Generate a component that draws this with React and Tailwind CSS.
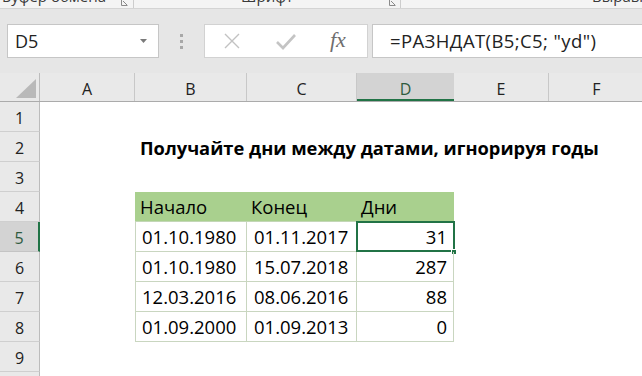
import React from "react";

const dataRows = [
  ["01.10.1980", "01.11.2017", "31"],
  ["01.10.1980", "15.07.2018", "287"],
  ["12.03.2016", "08.06.2016", "88"],
  ["01.09.2000", "01.09.2013", "0"],
];

function Launcher() {
  return (
    <svg width="7" height="6" viewBox="0 0 7 6" className="shrink-0">
      <path d="M0.5 0 V5.5 H6.5" fill="none" stroke="#8a8a8a" strokeWidth="1" />
      <path d="M2 1 L6 5" stroke="#8a8a8a" strokeWidth="1" />
    </svg>
  );
}

function RowHeader({ n, selected }) {
  return (
    <div
      className={
        selected
          ? "w-[40px] shrink-0 h-full bg-[#d3d3d3] border-b border-[#c4c4c4] border-r-2 border-r-[#217346] flex items-center justify-center pt-[3px] text-[16px] text-[#2f5b40]"
          : "w-[40px] shrink-0 h-full bg-[#e9e9e9] border-b border-[#cfcfcf] border-r border-r-[#bcbcbc] flex items-center justify-center pt-[3px] text-[16px] text-[#222]"
      }
    >
      {n}
    </div>
  );
}

function Blank({ w }) {
  return <div className={"shrink-0 h-full " + w} />;
}

export default function App() {
  return (
    <div className="w-[642px] h-[376px] overflow-hidden bg-white font-['Open_Sans',sans-serif] text-black">
      {/* ribbon bottom strip */}
      <div className="h-[9px] bg-[#f4f4f4] border-b border-[#d4d4d4] flex overflow-hidden text-[15px] leading-[15px] text-[#3a3a3a]">
        <div className="w-[134px] shrink-0 border-r border-[#cdcdcd] flex items-end relative">
          <span className="mb-[4px] ml-[2px] whitespace-nowrap">Буфер обмена</span>
          <div className="absolute left-[121px] top-0">
            <Launcher />
          </div>
        </div>
        <div className="w-[267px] shrink-0 border-r border-[#cdcdcd] flex items-end justify-center relative">
          <span className="mb-[4px] whitespace-nowrap">Шрифт</span>
          <div className="absolute left-[255px] top-0">
            <Launcher />
          </div>
        </div>
        <div className="flex-1 flex items-end pl-[191px]">
          <span className="mb-[4px] whitespace-nowrap">Выравнивание</span>
        </div>
      </div>

      {/* formula bar */}
      <div className="h-[64px] bg-[#e6e6e6] flex items-start pt-[15px] pl-[7px]">
        <div className="w-[152px] h-[34px] shrink-0 bg-white border border-[#c6c6c6] flex items-center justify-between pl-[7px] pr-[11px]">
          <span className="text-[18px] text-[#222] leading-none">D5</span>
          <svg width="7" height="4" viewBox="0 0 7 4">
            <path d="M0 0 H7 L3.5 4 Z" fill="#7a7a7a" />
          </svg>
        </div>
        <div className="w-[45px] h-[34px] shrink-0 flex flex-col items-center justify-center gap-[3px]">
          <div className="w-[3px] h-[3px] bg-[#a8a8a8]" />
          <div className="w-[3px] h-[3px] bg-[#a8a8a8]" />
          <div className="w-[3px] h-[3px] bg-[#a8a8a8]" />
        </div>
        <div className="w-[164px] h-[34px] shrink-0 bg-white border border-[#d2d2d2] flex items-center pl-[18px]">
          <svg width="18" height="16" viewBox="0 0 18 16" className="shrink-0">
            <path d="M2 1 L16 15 M16 1 L2 15" stroke="#c2c2c2" strokeWidth="1.4" fill="none" />
          </svg>
          <svg width="20" height="17" viewBox="0 0 20 17" className="shrink-0 ml-[35px]">
            <path d="M1 9 L7 15 L19 2" stroke="#c4c4c4" strokeWidth="2.6" fill="none" />
          </svg>
          <span className="ml-[34px] font-['Liberation_Serif',serif] italic text-[22px] leading-none text-[#6e6e6e] -mt-[2px]">
            fx
          </span>
        </div>
        <div className="ml-[4px] flex-1 h-[34px] bg-white border border-[#c6c6c6] border-r-0 flex items-center pl-[17px]">
          <span className="text-[18.5px] tracking-[0.4px] text-[#222] leading-none whitespace-nowrap">=РАЗНДАТ(B5;C5; "yd")</span>
        </div>
      </div>

      {/* column headers */}
      <div className="h-[29px] flex bg-[#e9e9e9] border-b border-[#ababab] text-[16px] text-[#222]">
        <div className="w-[40px] shrink-0 border-r border-[#bcbcbc] flex items-end justify-end pr-[3px] pb-[3px]">
          <svg width="20" height="19" viewBox="0 0 20 19">
            <path d="M20 0 V19 H0 Z" fill="#b9b9b9" />
          </svg>
        </div>
        <div className="w-[95px] shrink-0 border-r border-[#c8c8c8] flex items-center justify-center pt-[4px]">A</div>
        <div className="w-[112px] shrink-0 border-r border-[#c8c8c8] flex items-center justify-center pt-[4px]">B</div>
        <div className="w-[110px] shrink-0 border-r border-[#c8c8c8] flex items-center justify-center pt-[4px]">C</div>
        <div className="w-[97px] shrink-0 bg-[#d3d3d3] border-b-2 border-[#217346] flex items-center justify-center pt-[6px] text-[#2f5b40]">D</div>
        <div className="w-[95px] shrink-0 border-r border-[#c8c8c8] flex items-center justify-center pt-[4px]">E</div>
        <div className="flex-1 flex items-center pt-[4px]">
          <span className="w-[95px] text-center">F</span>
        </div>
      </div>

      {/* rows */}
      <div className="flex flex-col text-[18.5px] leading-none">
        <div className="h-[30px] flex">
          <RowHeader n="1" />
        </div>
        <div className="h-[30px] flex">
          <RowHeader n="2" />
          <Blank w="w-[95px]" />
          <div className="h-full flex items-end pb-[5px] pl-[5px] font-bold text-[18.3px] whitespace-nowrap">
            Получайте дни между датами, игнорируя годы
          </div>
        </div>
        <div className="h-[30px] flex">
          <RowHeader n="3" />
        </div>
        <div className="h-[30px] flex">
          <RowHeader n="4" />
          <Blank w="w-[95px]" />
          <div className="w-[112px] shrink-0 h-full bg-[#a9d08e] border-b border-[#c3d7b6] flex items-end pb-[5px] pl-[5px]">Начало</div>
          <div className="w-[110px] shrink-0 h-full bg-[#a9d08e] border-b border-[#c3d7b6] flex items-end pb-[5px] pl-[4px]">Конец</div>
          <div className="w-[97px] shrink-0 h-full bg-[#a9d08e] border-b border-[#c3d7b6] flex items-end pb-[5px] pl-[4px]">Дни</div>
        </div>
        {dataRows.map((r, i) => (
          <div key={i} className="h-[30px] flex">
            <RowHeader n={String(5 + i)} selected={i === 0} />
            <Blank w="w-[95px]" />
            <div className="w-[112px] shrink-0 h-full border-l border-r border-b border-[#c9d6c0] flex items-end pb-[5px] pl-[6px]">{r[0]}</div>
            <div className="w-[110px] shrink-0 h-full border-r border-b border-[#c9d6c0] flex items-end pb-[5px] pl-[7px]">{r[1]}</div>
            <div className="w-[97px] shrink-0 h-full border-r border-b border-[#c9d6c0] flex items-end justify-end pb-[5px] pr-[6px] relative">
              {r[2]}
              {i === 0 && (
                <>
                  <div className="absolute left-[-1px] top-[-1px] w-[99px] h-[31px] border-2 border-[#217346]" />
                  <div className="absolute right-[-4px] bottom-[-4px] w-[6px] h-[6px] bg-[#217346] border border-white" />
                </>
              )}
            </div>
          </div>
        ))}
        <div className="h-[30px] flex">
          <RowHeader n="9" />
        </div>
        <div className="h-[30px] flex">
          <RowHeader n="10" />
        </div>
      </div>
    </div>
  );
}
